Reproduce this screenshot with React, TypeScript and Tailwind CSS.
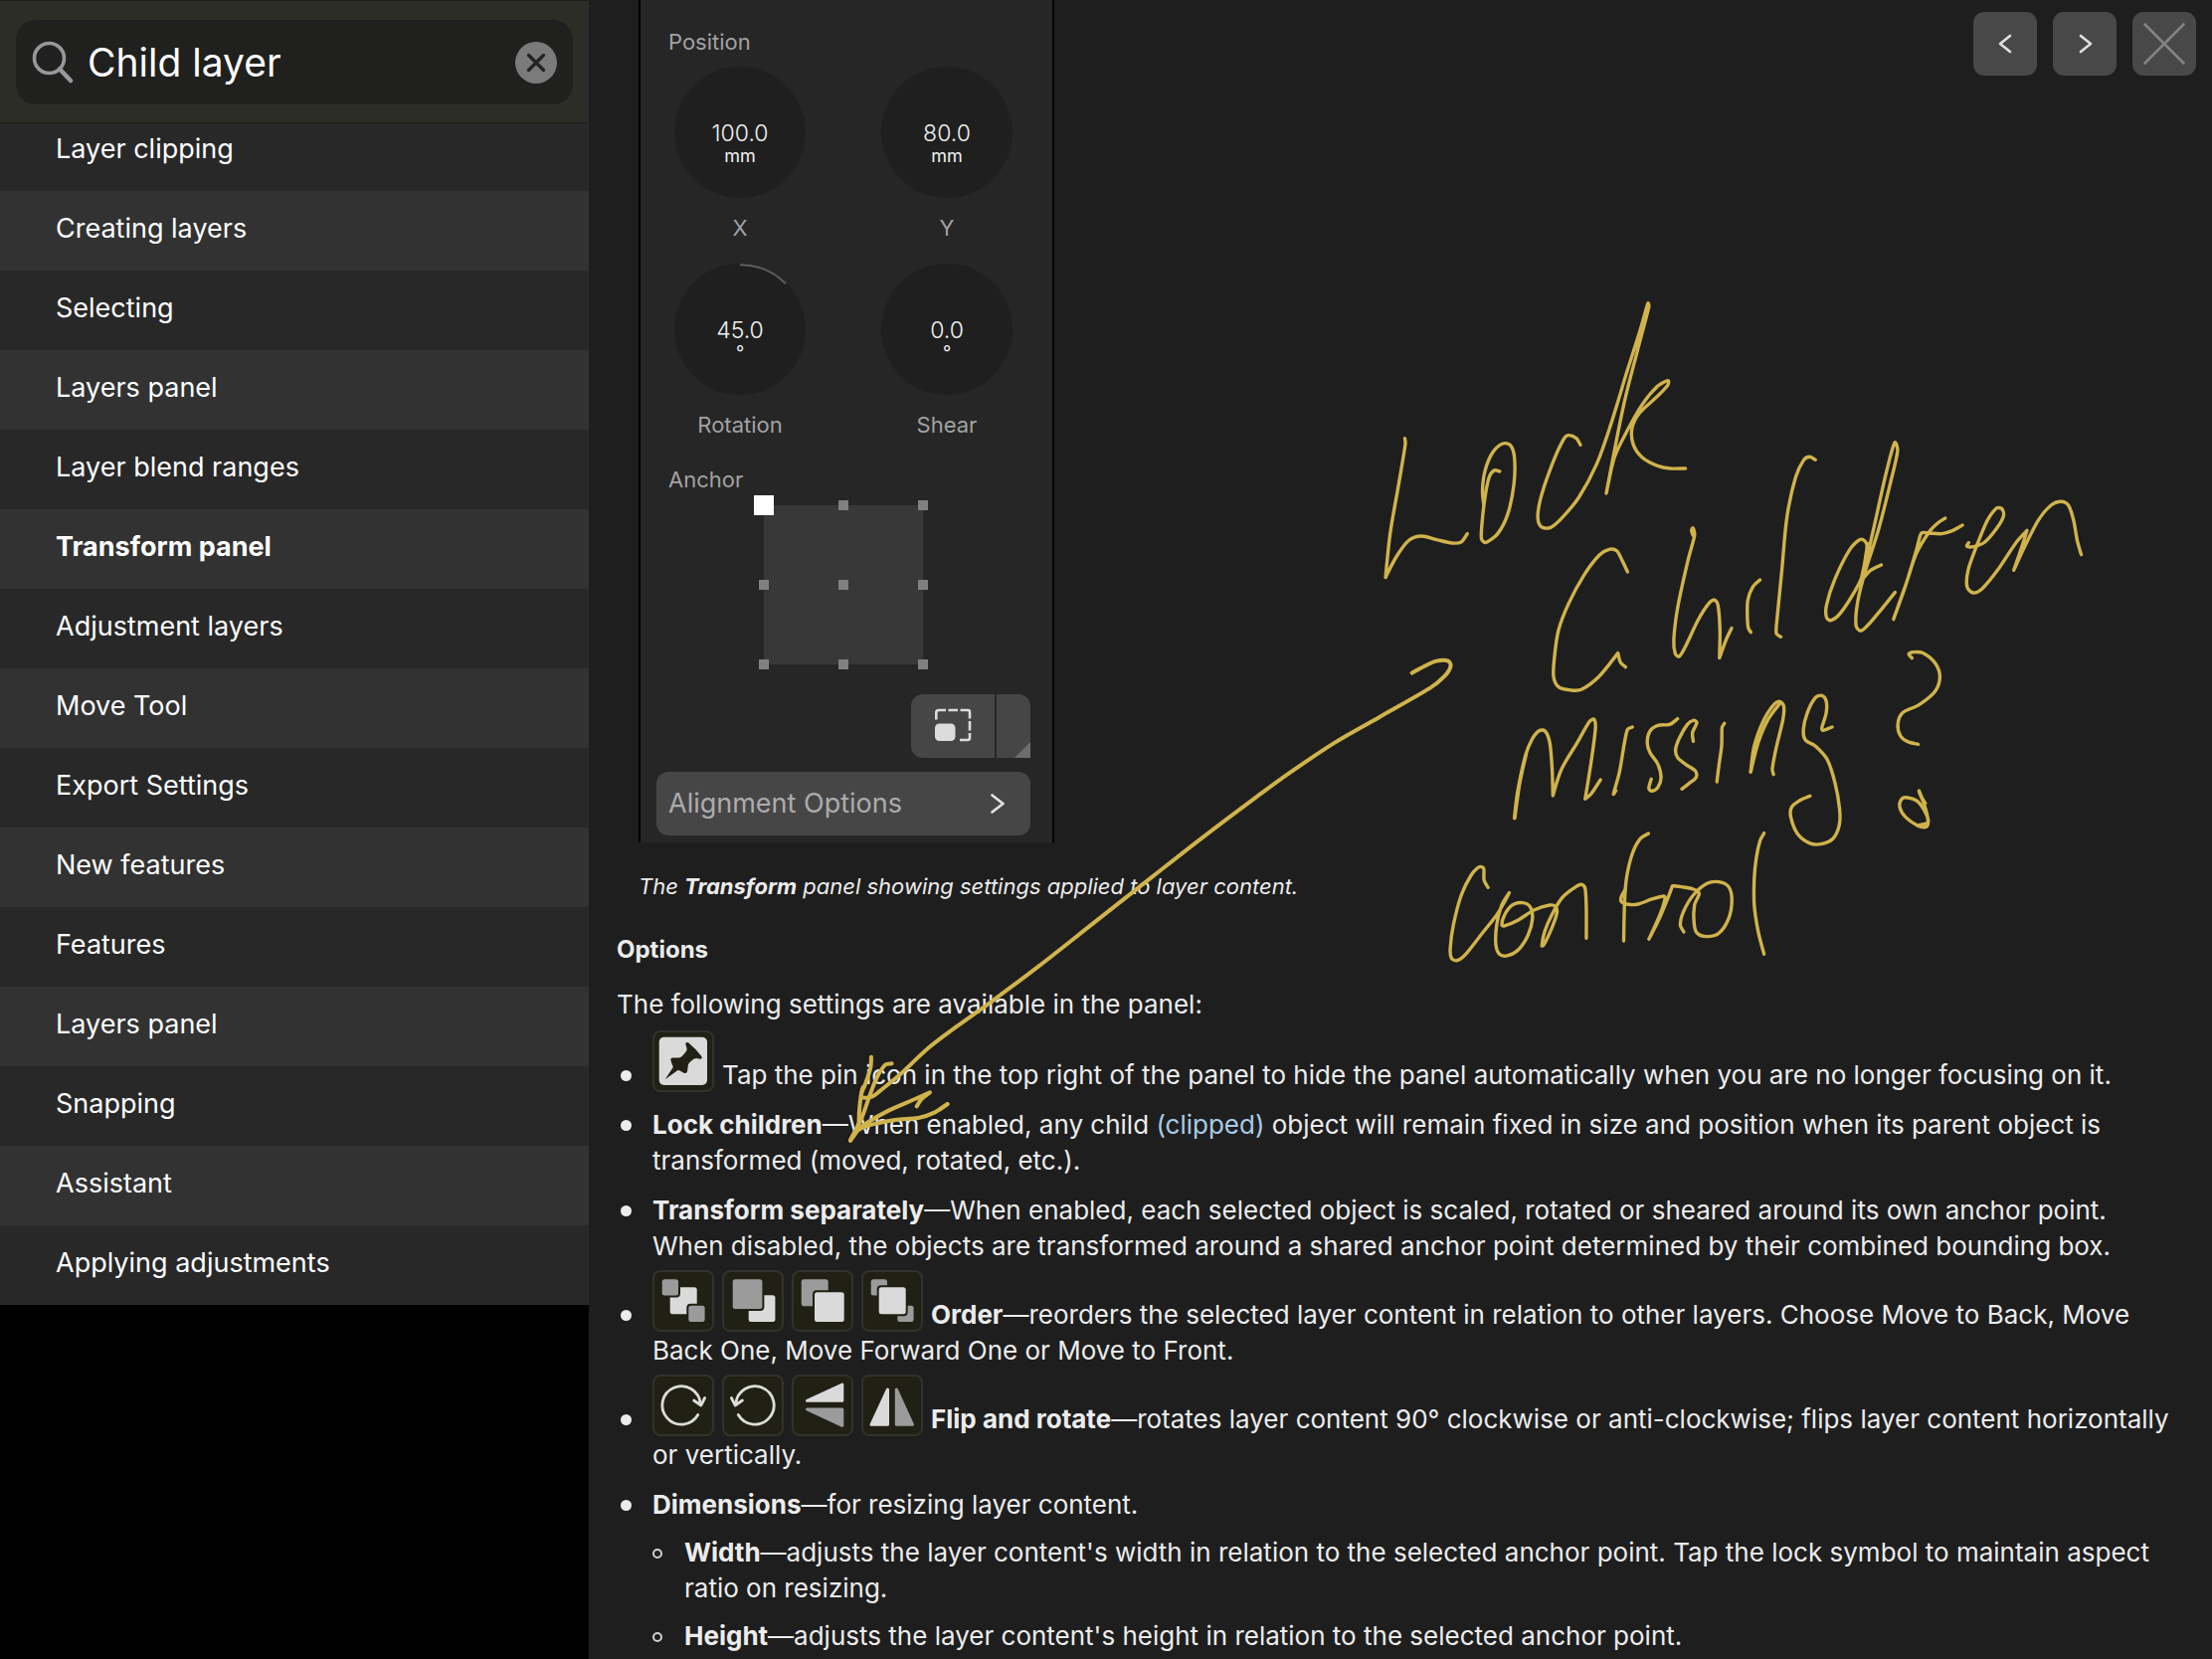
import { useState } from 'react';
import type { ReactNode } from 'react';

const topics = [
  'Layer clipping',
  'Creating layers',
  'Selecting',
  'Layers panel',
  'Layer blend ranges',
  'Transform panel',
  'Adjustment layers',
  'Move Tool',
  'Export Settings',
  'New features',
  'Features',
  'Layers panel',
  'Snapping',
  'Assistant',
  'Applying adjustments',
];

const ink = [
  {
    transform: 'translate(1340 280) scale(0.5102 0.3333)',
    width: 3.4,
    strokes: [
      '142,482 143,500 130,620 113,770 104,902 104,902 125,840 150,790 175,777 205,788 235,798 253,795 265,770',
      '298,687 295,640 300,580 315,525 335,498 350,503 358,540 357,620 345,710 325,770 302,796 293,785 294,740 300,660 308,600 318,579 329,582',
      '488,502 480,482 464,473 455,485 435,550 412,650 404,715 410,748 428,752 450,725 485,660 520,560 548,440 580,280 605,160 621,75 623,85 600,220 575,370 555,520 539,648 539,648 555,540 580,460 610,380 640,325 660,308 660,322 640,355 605,405 590,450 592,500 610,540 640,565 665,573 695,573',
      '581,885 570,850 560,822 545,817 525,835 495,895 465,980 445,1060 437,1140 435,1200 445,1232 470,1242 490,1240 525,1200 562,1130 562,1130 567,1158 577,1172',
      '710,775 707,760 710,753 713,775 700,850 680,990 672,1090 675,1132 683,1140 695,1110 720,1030 740,982 752,970 759,985 763,1060 762,1145 762,1145 775,1090 786,1055',
      '842,909 828,930 818,970 817,1020 819,1055 824,1067',
      '951,547 940,538 928,548 912,600 895,720 885,880 876,1020 874,1070 883,1081',
      '1056,850 1052,800 1040,787 1020,815 990,905 973,985 973,1022 982,1031 1000,1010 1030,940 1045,890 1065,760 1090,590 1107,496 1113,520 1100,610 1075,760 1050,880 1035,970 1031,1045 1040,1063 1055,1045 1080,1000 1108,947',
      '1054,800 1048,860 1043,905 1060,880 1081,864',
      '1207,723 1192,738 1175,765 1150,830 1130,920 1105,1028 1105,1028 1128,930 1150,820 1160,768 1175,768 1200,770 1222,760 1241,744',
      '1253,797 1250,808 1265,808 1285,795 1310,750 1322,715 1318,694 1308,693 1290,730 1268,810 1252,880 1250,930 1262,948 1280,935 1310,880 1345,800 1368,760 1368,760 1360,800 1342,880 1342,880 1360,820 1390,730 1415,685 1435,673 1450,685 1460,730 1467,790 1475,833',
    ],
  },
  {
    transform: 'translate(1400 600) scale(0.3954 0.3333)',
    width: 3.4,
    strokes: [
      '1321,185 1313,173 1325,167 1350,170 1380,200 1392,240 1380,285 1340,325 1297,350 1285,385 1292,420 1310,437 1337,445',
      '1339,586 1345,605 1355,623',
      '1339,586 1348,612 1358,650 1362,682 1355,695 1335,690 1305,665 1290,635 1295,610 1310,606 1335,617 1355,650 1362,680 1335,690',
      '310,668 318,590 338,480 355,430 372,405 388,405 400,440 406,520 408,600 408,600 430,520 470,440 500,378 513,370 516,400 505,500 490,610 490,610 505,595 529,552',
      '340,475 324,560 311,668',
      '610,393 598,400 590,440 577,530 562,595 568,585',
      '725,368 705,385 675,388 655,405 648,440 655,470 675,505 683,545 675,575 660,586 652,578 658,550',
      '765,436 763,410 774,380 765,373 750,385 730,425 720,460 725,485 745,505 770,525 772,545 755,562 736,580',
      '844,382 838,395 837,450 830,510 825,558',
      '911,528 920,450 945,370 970,325 985,316 995,330 993,370 975,460 966,520 969,536',
      '911,528 930,440 955,370 985,322',
      '1118,393 1095,403 1092,395 1103,350 1103,315 1092,298 1075,305 1055,350 1045,400 1050,432 1075,450 1105,490 1125,560 1137,640 1136,690 1120,730 1090,746 1060,743 1030,715 1013,665 1015,635 1035,615 1062,601',
      '243,877 233,855 232,820 220,815 200,840 175,900 155,990 147,1060 150,1090 165,1097 185,1080 225,1020 265,960 285,920 297,893 297,893 278,930 265,990 263,1050 272,1078 292,1083 320,1065 345,1020 356,970 350,935 330,923 305,930 285,960 278,990 285,993 320,975 360,945 400,930 415,935 418,955 405,1000 385,1050 380,1053 387,1010 405,960 430,910 460,880 480,868 490,880 493,940 493,1030',
      '651,714 630,730 610,775 595,850 590,930 588,1038',
      '592,883 582,905 582,920 600,928 625,927 660,912 690,903 693,912 680,960 652,1033 652,1033 675,980 700,910 712,872 712,872 735,875 765,882 780,895 768,930 767,985 775,1015 800,1025 830,1015 855,970 863,915 855,875 830,860 800,865 765,900 740,950 732,990 741,1011',
      '945,713 935,735 925,790 920,850 920,930 930,1010 945,1078',
    ],
  },
  {
    transform: 'translate(840 640) scale(0.4082 0.3333)',
    width: 4,
    strokes: [
      '1420,110 1450,90 1480,74 1508,73 1515,90 1500,120 1465,155 1340,243 1230,320 1120,410 1030,490 900,610 780,725 640,860 500,995 380,1105 300,1175 230,1240 160,1320 110,1370 90,1388 65,1390 65,1370 68,1360',
    ],
  },
  {
    transform: 'translate(640 1020) scale(0.3333)',
    width: 4,
    strokes: [
      '708,128 706,160 690,210 678,240 672,290 668,345 645,380',
      '770,148 750,152 725,190 705,240 680,310 660,350 645,380',
      '845,277 860,255 885,235 885,235 840,255 760,290 690,330 665,350',
      '938,270 900,295 850,312 780,318 700,335 660,355 645,380',
      '938,270 915,286',
    ],
  },
];

// Catmull-Rom through the samples, written as cubic segments.
// Handles are kept under a third of the segment so tight turns don't overshoot;
// a repeated sample makes a corner.
function smooth(samples: string) {
  const pts = samples.split(' ').map((p) => p.split(',').map(Number));
  let d = `M${pts[0][0]} ${pts[0][1]}`;
  for (let i = 0; i < pts.length - 1; i++) {
    const a = pts[Math.max(i - 1, 0)];
    const b = pts[i];
    const c = pts[i + 1];
    const e = pts[Math.min(i + 2, pts.length - 1)];
    const span = Math.hypot(c[0] - b[0], c[1] - b[1]);
    if (span === 0) continue;
    const handle = (from: number[], to: number[]) => {
      const x = (to[0] - from[0]) / 6;
      const y = (to[1] - from[1]) / 6;
      const k = Math.min(1, span / 3 / (Math.hypot(x, y) || 1));
      return [x * k, y * k];
    };
    const [x1, y1] = handle(a, c);
    const [x2, y2] = handle(b, e);
    d += `C${b[0] + x1} ${b[1] + y1} ${c[0] - x2} ${c[1] - y2} ${c[0]} ${c[1]}`;
  }
  return d;
}

function InkLayer() {
  return (
    <svg
      className="pointer-events-none absolute inset-0 z-20 h-full w-full"
      viewBox="0 0 2224 1668"
      preserveAspectRatio="xMinYMin meet"
      fill="none"
      stroke="#d0b34b"
      strokeLinecap="round"
      strokeLinejoin="round"
      aria-hidden="true"
    >
      {ink.map((patch) => (
        <g key={patch.transform} transform={patch.transform} strokeWidth={patch.width}>
          {patch.strokes.map((s) => (
            <path key={s} d={smooth(s)} vectorEffect="non-scaling-stroke" />
          ))}
        </g>
      ))}
    </svg>
  );
}

function Sidebar() {
  const [query, setQuery] = useState('Child layer');

  return (
    <aside className="flex w-[592px] shrink-0 flex-col bg-black">
      <div className="relative z-10 border-y border-[#1c1c1b] bg-[#2d2d28] px-4 pt-[19px] pb-[18px]">
        <div className="flex h-[85px] items-center rounded-[20px] bg-[#20201e] px-4">
          <svg className="h-12 w-12 shrink-0" viewBox="0 0 48 48" fill="none" stroke="#98989c" strokeWidth="3.6" strokeLinecap="round" aria-hidden="true">
            <circle cx="17.500" cy="19.500" r="15" />
            <path d="M28 30.500L39 42" strokeWidth="4.600" />
          </svg>
          <input
            type="text"
            aria-label="Search"
            value={query}
            onChange={(e) => setQuery(e.target.value)}
            className="ml-2 min-w-0 flex-1 bg-transparent text-[39px] leading-[48px] text-white outline-none"
          />
          <button type="button" aria-label="Clear search" onClick={() => setQuery('')}>
            <svg className="h-[42px] w-[42px]" viewBox="0 0 42 42" aria-hidden="true">
              <circle cx="21" cy="21" r="21" fill="#7b7b7b" />
              <path d="M13.500 13.500l15 15M28.500 13.500l-15 15" stroke="#232321" strokeWidth="3.400" strokeLinecap="round" />
            </svg>
          </button>
        </div>
      </div>
      <nav className="-mt-3">
        <ul>
          {topics.map((topic, index) => (
            <li key={index} className="odd:bg-[#282828] even:bg-[#323232]">
              <a
                href="#"
                className={`block h-20 px-14 pt-5 text-[27px] leading-9 text-white ${topic === 'Transform panel' ? 'font-bold' : ''}`}
              >
                {topic}
              </a>
            </li>
          ))}
        </ul>
      </nav>
    </aside>
  );
}

type KnobProps = { label: string; value: string; unit: string; arc?: boolean };

function Knob({ label, value, unit, arc }: KnobProps) {
  return (
    <div className="flex flex-col items-center">
      <div className="relative flex h-[132px] w-[132px] flex-col items-center rounded-full bg-[#1f1f1f] pt-[53px] text-[#f0f0f0]">
        {arc && (
          <svg className="absolute inset-0" viewBox="0 0 132 132" fill="none" aria-hidden="true">
            <path d="M66 1.200A64.800 64.800 0 0 1 112 20.200" stroke="#5e5e5e" strokeWidth="2" />
          </svg>
        )}
        <span className="text-[23px] leading-7 font-light">{value}</span>
        <span className="text-lg leading-[18px]">{unit}</span>
      </div>
      <span className="mt-4 text-[22px] leading-7 text-[#a2a2a2]">{label}</span>
    </div>
  );
}

function AnchorGrid() {
  const stops = [10, 90, 170];
  return (
    <svg className="mt-[2px] ml-[98px] block h-[180px] w-[180px]" viewBox="0 0 180 180" role="img" aria-label="Anchor point">
      <rect x="10" y="10" width="160" height="160" fill="#383838" />
      {stops.map((y) => stops.map((x) => <rect key={`${x}-${y}`} x={x - 5} y={y - 5} width="10" height="10" fill="#808080" />))}
      <rect width="20" height="20" fill="#fff" />
    </svg>
  );
}

function TransformPanel() {
  return (
    <div className="w-[418px] border-x-2 border-black bg-[#262626] px-4 pt-7 pb-[7px]">
      <div className="px-3 text-[22px] leading-7 text-[#a2a2a2]">Position</div>
      <div className="mt-[11px] grid grid-cols-[132px_132px] gap-x-[76px] gap-y-[22px] pl-[18px]">
        <Knob label="X" value="100.0" unit="mm" />
        <Knob label="Y" value="80.0" unit="mm" />
        <Knob label="Rotation" value="45.0" unit="°" arc />
        <Knob label="Shear" value="0.0" unit="°" />
      </div>
      <div className="mt-[27px] px-3 text-[22px] leading-7 text-[#a2a2a2]">Anchor</div>
      <AnchorGrid />
      <div className="mt-5 mr-[6px] flex justify-end gap-[2px]">
        <button type="button" aria-label="Transform mode" className="rounded-l-xl bg-[#464646]">
          <svg className="h-16 w-[84px]" viewBox="0 0 84 64" fill="none" stroke="#dcdcde" strokeWidth="2.600" aria-hidden="true">
            <rect x="24" y="29.500" width="20.500" height="17.500" rx="4.500" fill="#dcdcde" stroke="none" />
            <path d="M25.300 25.500V18.500Q25.300 16 27.800 16H35M37.500 16H47M49.500 16H57Q59 16 59 18V24.500M59 27V36.500M59 39V43.800Q59 46 56.800 46H49" />
          </svg>
        </button>
        <button type="button" aria-label="More transform modes" className="rounded-tr-xl bg-[#464646]">
          <svg className="h-16 w-[34px]" viewBox="0 0 34 64" aria-hidden="true">
            <path d="M34 48v16H18z" fill="#6d6d6d" />
          </svg>
        </button>
      </div>
      <button
        type="button"
        className="mt-[14px] mr-[6px] flex h-16 w-[376px] items-center justify-between rounded-xl bg-[#464646] pr-[26px] pl-3 text-[27px] leading-9 text-[#acacac]"
      >
        Alignment Options
        <svg className="h-5 w-[14px]" viewBox="0 0 14 20" fill="none" stroke="#e4e4e4" strokeWidth="2.600" strokeLinecap="round" strokeLinejoin="round" aria-hidden="true">
          <path d="M1.500 1.500L12.500 10L1.500 18.500" />
        </svg>
      </button>
    </div>
  );
}

function IconTile({ label, children }: { label: string; children: ReactNode }) {
  return (
    <svg className="-mt-2 mr-2 inline-block h-[62px] w-[62px] align-[-8px]" viewBox="0 0 62 62" role="img" aria-label={label}>
      <rect x="1" y="1" width="60" height="60" rx="7" fill="#202015" stroke="#32322c" strokeWidth="2" />
      {children}
    </svg>
  );
}

type BlockProps = { x: number; y: number; size: number; tone: 'light' | 'dim' };

// Rounded square with a gap cut out of whatever lies beneath it
function Block({ x, y, size, tone }: BlockProps) {
  return (
    <g>
      <rect x={x - 2} y={y - 2} width={size + 4} height={size + 4} rx="4" fill="#202015" />
      <rect x={x} y={y} width={size} height={size} rx="2.500" fill={tone === 'light' ? '#dadada' : '#9b9b9b'} />
    </g>
  );
}

function RotateArrow() {
  return (
    <g fill="none" stroke="#dcdcd8" strokeWidth="2.800" strokeLinecap="round" strokeLinejoin="round">
      <path d="M45.700 40.500A19.200 19.200 0 1 1 48.200 29.500" />
      <path d="M41.600 26L48.800 31L52.600 23.500" />
    </g>
  );
}

function Option({ children }: { children: ReactNode }) {
  return (
    <li className="before:mr-[21px] before:-ml-8 before:inline-block before:h-[11px] before:w-[11px] before:rounded-full before:bg-[#ececec] before:align-[3px] before:content-['']">
      {children}
    </li>
  );
}

function SubOption({ children }: { children: ReactNode }) {
  return (
    <li className="before:mr-[22px] before:-ml-8 before:inline-block before:h-[10px] before:w-[10px] before:rounded-full before:border-2 before:border-[#d0d0d0] before:align-[3px] before:content-['']">
      {children}
    </li>
  );
}

function ToolbarButton({ label, children }: { label: string; children: ReactNode }) {
  return (
    <button type="button" aria-label={label} className="rounded-[11px] bg-[#484848]">
      <svg className="h-16 w-16" viewBox="0 0 64 64" fill="none" stroke="#e0e0e0" strokeWidth="2.600" strokeLinecap="round" strokeLinejoin="round" aria-hidden="true">
        {children}
      </svg>
    </button>
  );
}

export default function App() {
  return (
    <div className="relative flex h-screen overflow-hidden bg-[#1e1e1e] font-['Inter','Liberation_Sans',sans-serif] text-[#ececec]">
      <Sidebar />

      <main className="min-w-0 flex-1 overflow-hidden pr-10 pl-7 text-[26px] leading-9">
        <figure className="pl-[22px]">
          <TransformPanel />
          <figcaption className="mt-7 text-[22px] leading-8 italic">
            The <strong>Transform</strong> panel showing settings applied to layer content.
          </figcaption>
        </figure>

        <h2 className="mt-8 text-2xl font-bold">Options</h2>
        <p className="mt-[21px]">The following settings are available in the panel:</p>

        <ul className="mt-4 flex flex-col gap-[14px] pl-9">
          <Option>
            <IconTile label="Pin">
              <rect x="6.700" y="6.700" width="48.300" height="48.300" rx="5" fill="#dadada" />
              <path
                d="M12.700 49.300L20.500 37.500Q21 36 19.500 33.500L18.400 30Q18 27.500 20.500 27.400L26.500 27.600Q28.500 27.300 30 25.800L34 21Q35 19.500 34.400 17.500L33.300 14Q33.200 11.500 36 12.300Q43 18 49.300 26Q50.500 28.500 48 28.700L44 28Q42 28 40.500 29.500L36.800 32.800Q35.500 34.500 35.600 37L35 41.500Q34 43.500 32 43L27.500 40.500Q26 39.500 24.500 40.700Z"
                fill="#202015"
              />
            </IconTile>
            Tap the pin icon in the top right of the panel to hide the panel automatically when you are no longer focusing on it.
          </Option>
          <Option>
            <strong>Lock children</strong>—When enabled, any child <a href="#" className="text-[#a9cbe8]">(clipped)</a> object will remain fixed in size and position when its parent object is transformed (moved, rotated, etc.).
          </Option>
          <Option>
            <strong>Transform separately</strong>—When enabled, each selected object is scaled, rotated or sheared around its own anchor point. When disabled, the objects are transformed around a shared anchor point determined by their combined bounding box.
          </Option>
          <Option>
            <IconTile label="Move to Back">
              <Block x={17.7} y={17.3} size={27} tone="light" />
              <Block x={9.7} y={9.3} size={16.3} tone="dim" />
              <Block x={36.3} y={35.7} size={16.3} tone="dim" />
            </IconTile>
            <IconTile label="Move Back One">
              <Block x={26.7} y={25.3} size={26.7} tone="light" />
              <Block x={10.7} y={9.3} size={29.7} tone="dim" />
            </IconTile>
            <IconTile label="Move Forward One">
              <Block x={9.7} y={9.3} size={27} tone="dim" />
              <Block x={23} y={22.3} size={29.7} tone="light" />
            </IconTile>
            <IconTile label="Move to Front">
              <Block x={9.7} y={9.3} size={16.3} tone="dim" />
              <Block x={36.3} y={35.7} size={16.3} tone="dim" />
              <Block x={17.7} y={17.3} size={27} tone="light" />
            </IconTile>
            <strong>Order</strong>—reorders the selected layer content in relation to other layers. Choose Move to Back, Move Back One, Move Forward One or Move to Front.
          </Option>
          <Option>
            <IconTile label="Rotate clockwise">
              <RotateArrow />
            </IconTile>
            <IconTile label="Rotate anti-clockwise">
              <g transform="translate(62 0) scale(-1 1)">
                <RotateArrow />
              </g>
            </IconTile>
            <IconTile label="Flip vertically">
              <g strokeWidth="3" strokeLinejoin="round">
                <path d="M15.500 26.300L50.800 10V26.300z" fill="#dadada" stroke="#dadada" />
                <path d="M15.500 35L50.800 51.300V35z" fill="#9b9b9b" stroke="#9b9b9b" />
              </g>
            </IconTile>
            <IconTile label="Flip horizontally">
              <g strokeWidth="3" strokeLinejoin="round">
                <path d="M10 50.300H26.500V15z" fill="#dadada" stroke="#dadada" />
                <path d="M51.500 50.300H35.300V15z" fill="#9b9b9b" stroke="#9b9b9b" />
              </g>
            </IconTile>
            <strong>Flip and rotate</strong>—rotates layer content 90° clockwise or anti-clockwise; flips layer content horizontally or vertically.
          </Option>
          <Option>
            <strong>Dimensions</strong>—for resizing layer content.
            <ul className="mt-3 flex flex-col gap-3 pl-8">
              <SubOption>
                <strong>Width</strong>—adjusts the layer content's width in relation to the selected anchor point. Tap the lock symbol to maintain aspect ratio on resizing.
              </SubOption>
              <SubOption>
                <strong>Height</strong>—adjusts the layer content's height in relation to the selected anchor point.
              </SubOption>
            </ul>
          </Option>
        </ul>
      </main>

      <div className="absolute top-3 right-4 flex gap-4">
        <ToolbarButton label="Back">
          <path d="M37 24L27 32L37 40" />
        </ToolbarButton>
        <ToolbarButton label="Forward">
          <path d="M28 24L38 32L28 40" />
        </ToolbarButton>
        <ToolbarButton label="Close">
          <path d="M12.500 12.500L51.500 51.500M51.500 12.500L12.500 51.500" stroke="#848484" />
        </ToolbarButton>
      </div>

      <InkLayer />
    </div>
  );
}
